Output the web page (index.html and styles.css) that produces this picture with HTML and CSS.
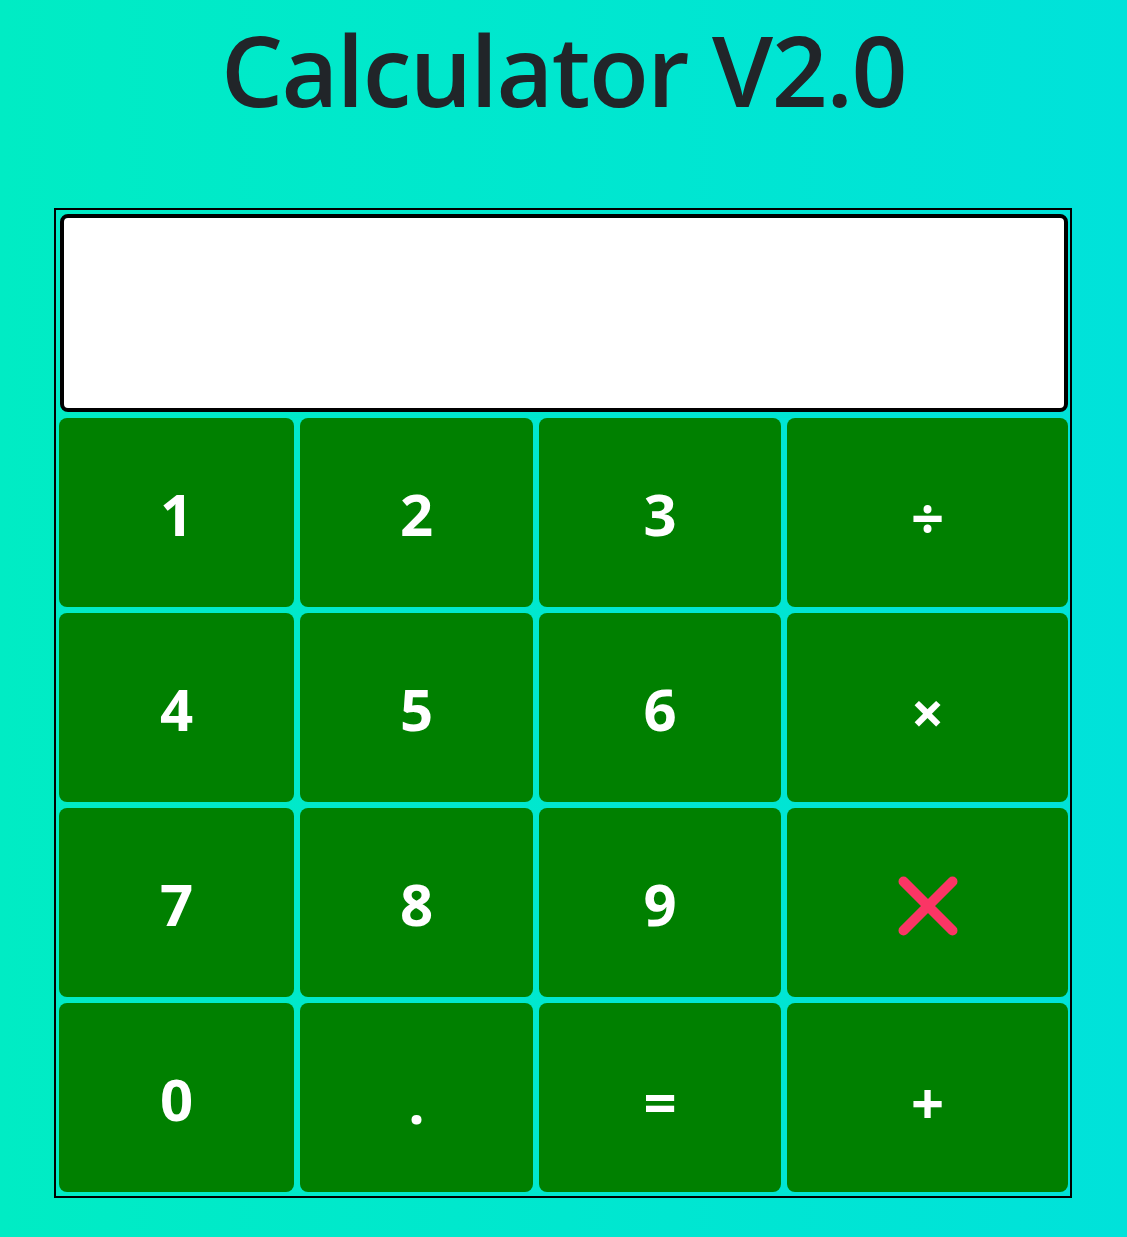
FILE: index.html
```html
<!DOCTYPE html>
<html lang="en">
<head>
<meta charset="utf-8">
<title>Calculator V2.0</title>
<link rel="stylesheet" href="styles.css">
</head>
<body>
  <h1 class="title">Calculator V2.0</h1>
  <div class="calc">
    <div class="display"></div>
    <div class="keys">
      <button class="key">1</button>
      <button class="key">2</button>
      <button class="key">3</button>
      <button class="key op">÷</button>
      <button class="key">4</button>
      <button class="key">5</button>
      <button class="key">6</button>
      <button class="key op">×</button>
      <button class="key">7</button>
      <button class="key">8</button>
      <button class="key">9</button>
      <button class="key clear" aria-label="clear">
        <svg width="60" height="60" viewBox="0 0 60 60"><path d="M5.5 5.5 L54.5 54.5 M54.5 5.5 L5.5 54.5" stroke="#fb3565" stroke-width="10" stroke-linecap="round" fill="none"/></svg>
      </button>
      <button class="key">0</button>
      <button class="key dot">.</button>
      <button class="key eq">=</button>
      <button class="key op">+</button>
    </div>
  </div>
</body>
</html>
```

FILE: styles.css
```css
html, body {
  margin: 0;
  padding: 0;
}
body {
  min-height: 1237px;
  background: linear-gradient(to right, #00ecc4, #00e2da);
  font-family: "Open Sans", "Noto Sans", sans-serif;
}
.title {
  margin: 0;
  padding: 11px 0 79px;
  text-align: center;
  font-size: 98px;
  letter-spacing: -1.5px;
  line-height: 1.2;
  font-weight: 600;
  color: #212529;
}
.calc {
  box-sizing: border-box;
  width: 1018px;
  margin: 0 0 0 54px;
  border: 2px solid #000;
  padding: 4px 2px 4px 3px;
  display: flex;
  flex-direction: column;
  gap: 6px;
}
.display {
  box-sizing: border-box;
  height: 198px;
  margin-left: 1px;
  border: 4px solid #000;
  border-radius: 8px;
  background: #fff;
}
.keys {
  display: grid;
  grid-template-columns: 235px 233px 242px 281px;
  grid-auto-rows: 189px;
  gap: 6px;
}
.key {
  border: 0;
  margin: 0;
  padding: 3px 0 0;
  border-radius: 8px;
  background: #008000;
  color: #fff;
  font-family: "Open Sans", "Noto Sans", sans-serif;
  font-weight: 700;
  font-size: 58px;
  display: flex;
  align-items: center;
  justify-content: center;
}
.op {
  padding-top: 9px;
}
.dot,
.eq {
  padding-top: 9px;
}
.clear {
  padding-top: 0;
}
.clear svg {
  display: block;
  margin-top: 8px;
}
```
